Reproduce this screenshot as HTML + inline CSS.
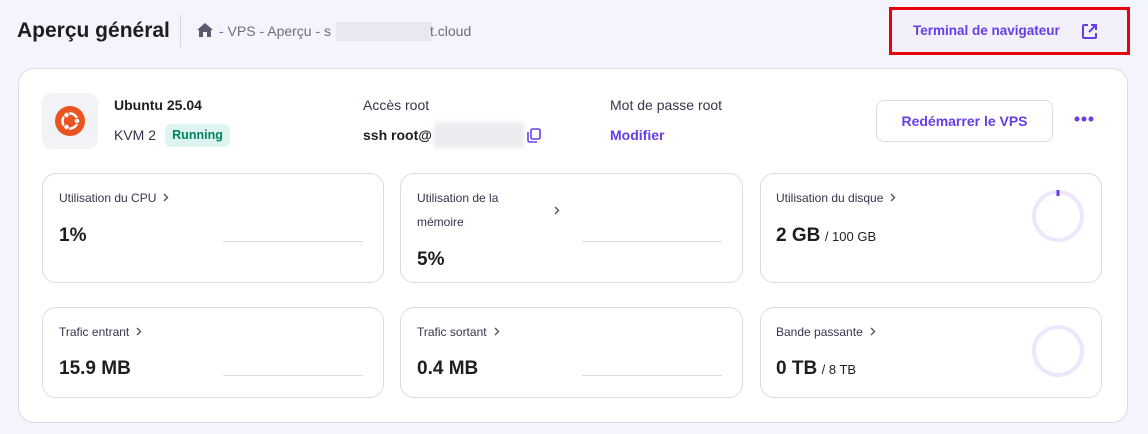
<!DOCTYPE html><html><head><style>
*{box-sizing:border-box;margin:0;padding:0}
body{width:1148px;height:434px;background:#f4f4fc;font-family:"Liberation Sans",sans-serif;color:#1d1e20;position:relative;overflow:hidden}
.a{position:absolute}
.card{position:absolute;background:#fff;border:1px solid #dadce0;border-radius:14px}
.lbl{font-size:12px;color:#36344d}
.big{font-size:19px;font-weight:bold}
.line{position:absolute;height:1px;background:#dadce0;width:140px}
.chev{display:inline-block;margin-left:7px;vertical-align:0px}
</style></head><body>
<div class="a" style="left:17px;top:19px;font-size:21px;font-weight:bold">Aperçu général</div>
<div class="a" style="left:180px;top:15px;width:1px;height:32px;background:#d5d5e0"></div>
<svg class="a" style="left:197px;top:23px" width="16" height="14" viewBox="0 0 16 14"><path d="M8 0L0 7h2v7h4V9h4v5h4V7h2z" fill="#5a5a6e"/></svg>
<div class="a" style="left:219px;top:23px;font-size:14px;color:#6d6d80">- VPS - Aperçu - s</div>
<div class="a" style="left:336px;top:22px;width:96px;height:19px;background:#e8e8f2"></div>
<div class="a" style="left:430px;top:23px;font-size:14px;color:#6d6d80">t.cloud</div>
<div class="a" style="left:891px;top:9px;width:237px;height:44px;background:#f1f0fb;border:1px solid #dcdae8;border-radius:4px"></div>
<div class="a" style="left:889px;top:7px;width:241px;height:48px;border:3px solid #e8000b"></div>
<div class="a" style="left:913px;top:23px;font-size:13.5px;font-weight:bold;color:#673de6">Terminal de navigateur</div>
<svg class="a" style="left:1081px;top:23px" width="17" height="17" viewBox="0 0 17 17" fill="none" stroke="#673de6" stroke-width="2"><path d="M7 2H3a1 1 0 0 0-1 1v11a1 1 0 0 0 1 1h11a1 1 0 0 0 1-1v-4M10 2h5v5M15 2L8 9"/></svg>
<div class="card" style="left:18px;top:68px;width:1110px;height:355px;border-radius:16px"></div>
<div class="a" style="left:42px;top:93px;width:56px;height:56px;background:#f2f3f6;border-radius:10px"></div>
<svg class="a" style="left:55px;top:106px" width="30" height="30" viewBox="0 0 30 30"><circle cx="15" cy="15" r="15" fill="#e95420"/><circle cx="15" cy="15" r="7.5" fill="none" stroke="#fff" stroke-width="2.5"/><circle cx="22" cy="15" r="2.8" fill="#fff" stroke="#e95420"/><circle cx="11.5" cy="9" r="2.8" fill="#fff" stroke="#e95420"/><circle cx="11.5" cy="21" r="2.8" fill="#fff" stroke="#e95420"/></svg>
<div class="a" style="left:114px;top:97px;font-size:14px;font-weight:bold">Ubuntu 25.04</div>
<div class="a" style="left:114px;top:127px;font-size:14px;color:#36344d">KVM 2</div>
<div class="a" style="left:165px;top:124px;width:65px;height:23px;background:#def4f0;border-radius:6px;font-size:12.5px;font-weight:bold;color:#008361;text-align:center;line-height:23px">Running</div>
<div class="a" style="left:363px;top:97px;font-size:14px;color:#36344d">Accès root</div>
<div class="a" style="left:363px;top:127px;font-size:14px;font-weight:bold">ssh root@</div>
<div class="a" style="left:434px;top:122px;width:90px;height:26px;background:#ececf0;filter:blur(2px)"></div>
<svg class="a" style="left:527px;top:128px" width="14" height="15" viewBox="0 0 14 15" fill="none" stroke="#673de6" stroke-width="1.6"><rect x="4" y="1" width="9" height="10" rx="1.5"/><path d="M1 4v8.5A1.5 1.5 0 0 0 2.5 14H10"/></svg>
<div class="a" style="left:610px;top:97px;font-size:14px;color:#36344d">Mot de passe root</div>
<div class="a" style="left:610px;top:127px;font-size:14px;font-weight:bold;color:#673de6">Modifier</div>
<div class="a" style="left:876px;top:100px;width:177px;height:42px;border:1px solid #dadce0;border-radius:8px;font-size:14px;font-weight:bold;color:#673de6;text-align:center;line-height:40px">Redémarrer le VPS</div>
<svg class="a" style="left:1074px;top:116px" width="20" height="6"><circle cx="3" cy="3" r="2.5" fill="#673de6"/><circle cx="10" cy="3" r="2.5" fill="#673de6"/><circle cx="17" cy="3" r="2.5" fill="#673de6"/></svg>

<div class="card" style="left:42px;top:173px;width:342px;height:110px"></div>
<div class="a lbl" style="left:59px;top:191px">Utilisation du CPU<svg class="chev" width="6" height="9"><path d="M1 1l3.5 3.5L1 8" fill="none" stroke="#555" stroke-width="1.4"/></svg></div>
<div class="a big" style="left:59px;top:225px">1%</div>
<div class="line" style="left:223px;top:241px"></div>

<div class="card" style="left:400px;top:173px;width:343px;height:110px"></div>
<div class="a lbl" style="left:417px;top:191px">Utilisation de la</div>
<div class="a lbl" style="left:417px;top:215px">mémoire</div>
<svg class="a" style="left:554px;top:206px" width="6" height="9"><path d="M1 1l3.5 3.5L1 8" fill="none" stroke="#555" stroke-width="1.4"/></svg>
<div class="a big" style="left:417px;top:249px">5%</div>
<div class="line" style="left:582px;top:241px"></div>

<div class="card" style="left:760px;top:173px;width:342px;height:110px"></div>
<div class="a lbl" style="left:776px;top:191px">Utilisation du disque<svg class="chev" width="6" height="9"><path d="M1 1l3.5 3.5L1 8" fill="none" stroke="#555" stroke-width="1.4"/></svg></div>
<div class="a" style="left:776px;top:225px"><span class="big">2 GB</span> <span style="font-size:13px">/ 100 GB</span></div>
<svg class="a" style="left:1030px;top:188px" width="56" height="56"><circle cx="28" cy="28" r="24" fill="none" stroke="#ebe8fd" stroke-width="4"/><path d="M28 2v6" stroke="#673de6" stroke-width="3"/></svg>

<div class="card" style="left:42px;top:307px;width:342px;height:91px"></div>
<div class="a lbl" style="left:59px;top:325px">Trafic entrant<svg class="chev" width="6" height="9"><path d="M1 1l3.5 3.5L1 8" fill="none" stroke="#555" stroke-width="1.4"/></svg></div>
<div class="a big" style="left:59px;top:358px">15.9 MB</div>
<div class="line" style="left:223px;top:375px"></div>

<div class="card" style="left:400px;top:307px;width:343px;height:91px"></div>
<div class="a lbl" style="left:417px;top:325px">Trafic sortant<svg class="chev" width="6" height="9"><path d="M1 1l3.5 3.5L1 8" fill="none" stroke="#555" stroke-width="1.4"/></svg></div>
<div class="a big" style="left:417px;top:358px">0.4 MB</div>
<div class="line" style="left:582px;top:375px"></div>

<div class="card" style="left:760px;top:307px;width:342px;height:91px"></div>
<div class="a lbl" style="left:776px;top:325px">Bande passante<svg class="chev" width="6" height="9"><path d="M1 1l3.5 3.5L1 8" fill="none" stroke="#555" stroke-width="1.4"/></svg></div>
<div class="a" style="left:776px;top:358px"><span class="big">0 TB</span> <span style="font-size:13px">/ 8 TB</span></div>
<svg class="a" style="left:1030px;top:323px" width="56" height="56"><circle cx="28" cy="28" r="24" fill="none" stroke="#ebe8fd" stroke-width="4"/></svg>
</body></html>
